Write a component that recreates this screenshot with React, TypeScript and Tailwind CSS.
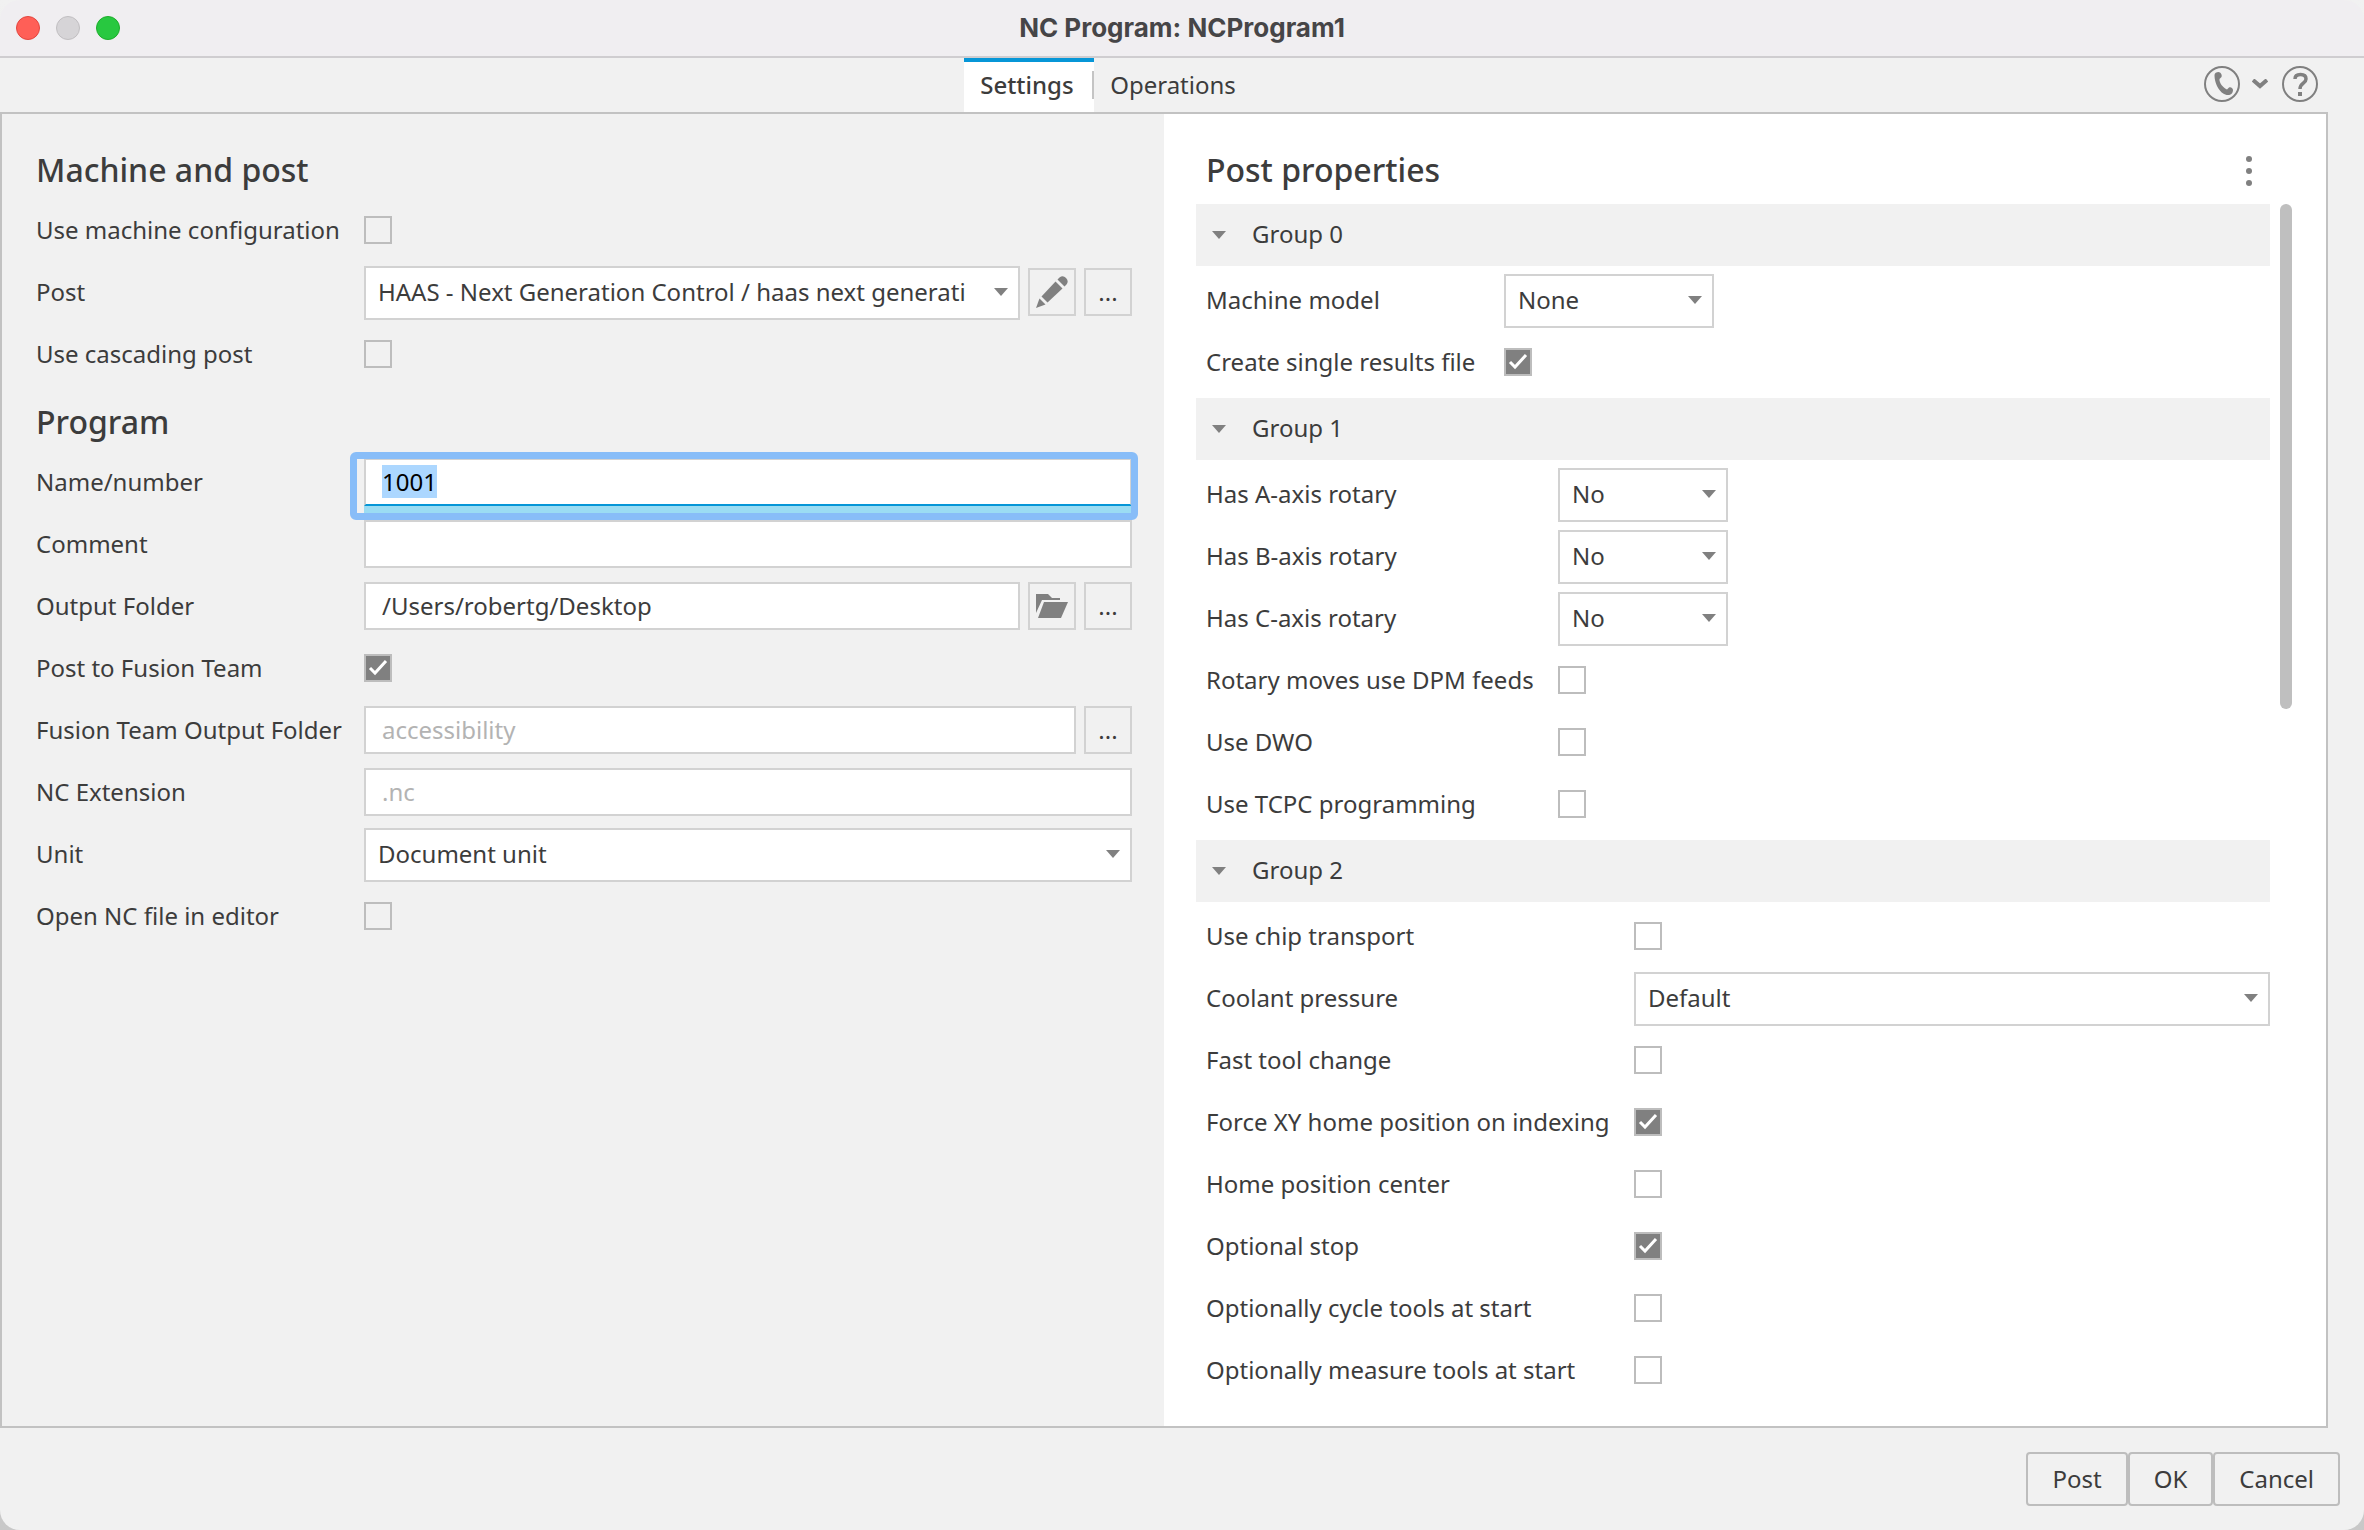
import React, { useEffect, useRef } from 'react';
import clsx from 'clsx';

const fieldBorder = 'border-2 border-[#d2d2d2]';

const DownArrow: React.FC<{ className?: string }> = ({ className }) => (
  <svg viewBox="0 0 14 8" className={clsx('h-2 w-3.5 fill-[#808080]', className)} aria-hidden="true">
    <path d="M0 0h14L7 8z" />
  </svg>
);

interface SelectProps {
  id: string;
  value: string;
  className?: string;
}

const Select: React.FC<SelectProps> = ({ id, value, className }) => (
  <div className={clsx('relative pt-0.5', className)}>
    <select
      id={id}
      defaultValue={value}
      className={clsx(
        fieldBorder,
        'block h-[54px] w-full appearance-none overflow-hidden bg-white pr-10 pb-0.5 pl-3 outline-none'
      )}
    >
      <option value={value}>{value}</option>
    </select>
    <DownArrow className="pointer-events-none absolute top-6 right-3" />
  </div>
);

const Checkbox: React.FC<{ id: string; checked?: boolean }> = ({ id, checked }) => (
  <span className="relative block size-7">
    <input
      id={id}
      type="checkbox"
      defaultChecked={checked}
      className="peer block size-7 appearance-none border-2 border-[#bdbdbd] checked:bg-[#808080]"
    />
    <svg
      viewBox="0 0 28 28"
      className="pointer-events-none absolute inset-0 hidden fill-none stroke-white stroke-3 peer-checked:block"
      aria-hidden="true"
    >
      <path d="M6 14l5 5L22 7" />
    </svg>
  </span>
);

interface TextFieldProps {
  id: string;
  value?: string;
  placeholder?: string;
}

const TextField: React.FC<TextFieldProps> = ({ id, value, placeholder }) => (
  <input
    id={id}
    type="text"
    defaultValue={value}
    placeholder={placeholder}
    className={clsx(
      fieldBorder,
      'block h-12 w-full min-w-0 flex-1 bg-white px-4 pb-0.5 outline-none placeholder:text-[#b3b3b3]'
    )}
  />
);

// Text field with the focus ring, selected on open
const FocusedField: React.FC<{ id: string; value: string }> = ({ id, value }) => {
  const ref = useRef<HTMLInputElement>(null);

  useEffect(() => {
    ref.current?.focus();
    ref.current?.select();
  }, []);

  return (
    <div className="relative h-12 flex-1">
      <input
        ref={ref}
        id={id}
        type="text"
        defaultValue={value}
        className="block h-12 w-full border-2 border-[#d2d2d2] border-b-[#0696d7] bg-white px-4 pb-0.5 leading-[34px] text-black outline-none selection:bg-[#acd7ff] selection:text-black"
      />
      <div className="absolute inset-x-0 top-full h-2 bg-[#9bdcf3]" />
      <div className="pointer-events-none absolute -top-1.5 -right-1.5 -bottom-3.5 -left-3.5 rounded-md border-[7px] border-[#88bdf8]" />
    </div>
  );
};

const IconButton: React.FC<{ label: string; children: React.ReactNode }> = ({ label, children }) => (
  <button
    type="button"
    aria-label={label}
    className={clsx(fieldBorder, 'flex size-12 shrink-0 items-center justify-center')}
  >
    {children}
  </button>
);

const PencilIcon = () => (
  <svg viewBox="0 0 32 32" className="size-8 fill-[#808080]" aria-hidden="true">
    <path d="M21.5 3.5l2-2a5 5 0 0 1 7 7l-2 2z" />
    <path d="M19.500 5.500l7 7L11.500 26.500l-6-6z" />
    <path d="M3.500 22.500l6 6L0 32z" />
  </svg>
);

const FolderIcon = () => (
  <svg viewBox="0 0 32 24" className="h-6 w-8 fill-[#808080]" aria-hidden="true">
    <path d="M0 0h12l4 4h8v2H6L0 19z" />
    <path d="M8 8h24l-7 16H2z" />
  </svg>
);

interface RowProps {
  id: string;
  label: string;
  labelClass: string;
  children: React.ReactNode;
}

const Row: React.FC<RowProps> = ({ id, label, labelClass, children }) => (
  <div className="flex h-[62px] items-center">
    <label htmlFor={id} className={clsx('shrink-0 whitespace-nowrap', labelClass)}>
      {label}
    </label>
    <div className="flex min-w-0 flex-1 items-center gap-2">{children}</div>
  </div>
);

interface Property {
  id: string;
  label: string;
  value?: string;
  checked?: boolean;
}

interface PropertyGroup {
  title: string;
  labelClass: string;
  selectClass: string;
  items: Property[];
}

const groups: PropertyGroup[] = [
  {
    title: 'Group 0',
    labelClass: 'w-[298px]',
    selectClass: 'w-[210px]',
    items: [
      { id: 'machine-model', label: 'Machine model', value: 'None' },
      { id: 'single-file', label: 'Create single results file', checked: true },
    ],
  },
  {
    title: 'Group 1',
    labelClass: 'w-[352px]',
    selectClass: 'w-[170px]',
    items: [
      { id: 'a-axis', label: 'Has A-axis rotary', value: 'No' },
      { id: 'b-axis', label: 'Has B-axis rotary', value: 'No' },
      { id: 'c-axis', label: 'Has C-axis rotary', value: 'No' },
      { id: 'dpm', label: 'Rotary moves use DPM feeds' },
      { id: 'dwo', label: 'Use DWO' },
      { id: 'tcpc', label: 'Use TCPC programming' },
    ],
  },
  {
    title: 'Group 2',
    labelClass: 'w-[428px]',
    selectClass: 'flex-1',
    items: [
      { id: 'chip', label: 'Use chip transport' },
      { id: 'coolant', label: 'Coolant pressure', value: 'Default' },
      { id: 'fast-tool', label: 'Fast tool change' },
      { id: 'force-home', label: 'Force XY home position on indexing', checked: true },
      { id: 'home-center', label: 'Home position center' },
      { id: 'optional-stop', label: 'Optional stop', checked: true },
      { id: 'cycle-tools', label: 'Optionally cycle tools at start' },
      { id: 'measure-tools', label: 'Optionally measure tools at start' },
    ],
  },
];

const Group: React.FC<{ group: PropertyGroup }> = ({ group }) => (
  <section>
    <button type="button" aria-expanded="true" className="flex h-[62px] w-full items-center gap-6 bg-[#f1f1f1] pl-4">
      <DownArrow />
      <span className="pb-0.5 pl-0.5">{group.title}</span>
    </button>
    <div className="pt-[3px] pb-[5px] pl-2.5">
      {group.items.map((item) => (
        <Row key={item.id} id={item.id} label={item.label} labelClass={group.labelClass}>
          {item.value ? (
            <Select id={item.id} value={item.value} className={group.selectClass} />
          ) : (
            <Checkbox id={item.id} checked={item.checked} />
          )}
        </Row>
      ))}
    </div>
  </section>
);

const TitleBar = () => (
  <header className="grid h-[58px] shrink-0 grid-cols-[1fr_auto_1fr] items-center border-b-2 border-[#cfcdd0] bg-[#f0eef1] px-4">
    <div className="flex gap-4">
      <button type="button" aria-label="Close" className="size-6 rounded-full border border-[#e2463f] bg-[#ff5f57]" />
      <button type="button" aria-label="Minimize" className="size-6 rounded-full border border-[#c0bec1] bg-[#d6d4d7]" />
      <button type="button" aria-label="Zoom" className="size-6 rounded-full border border-[#1dad2b] bg-[#28c840]" />
    </div>
    <h1 className="font-['Inter',sans-serif] text-[26px] font-bold text-[#464547]">NC Program: NCProgram1</h1>
  </header>
);

const TabBar = () => (
  <div className="flex h-[54px] shrink-0 items-center pr-[46px]">
    <div className="flex-1" />
    <nav role="tablist" className="ml-3 flex h-full">
      <button
        type="button"
        role="tab"
        aria-selected="true"
        className="flex h-full w-[130px] items-center justify-between border-t-4 border-[#0696d7] bg-white pb-1 pl-4 font-medium"
      >
        Settings
        <span className="h-7 w-0.5 bg-[#c4c4c4]" />
      </button>
      <button type="button" role="tab" aria-selected="false" className="h-full px-4">
        Operations
      </button>
    </nav>
    <div className="flex-1" />
    <div className="flex items-center gap-3 pb-0.5 text-[#808080]">
      <button type="button" aria-label="Contact support">
        <svg viewBox="0 0 36 36" className="size-9 fill-none stroke-current" aria-hidden="true">
          <circle cx="18" cy="18" r="17" strokeWidth="2" />
          <path
            d="M10.500 9c0-2 2-3 4-3 2 0 4 3 3 5l-2 2c-.5 4 4 9 7.500 10.500l2-2c2-1 4 1 4 2.500 0 3-2 5-5 5-7 0-13.500-10-13.500-20z"
            className="fill-current stroke-none"
          />
        </svg>
      </button>
      <button type="button" aria-label="More contact options" className="pr-0.5">
        <svg viewBox="0 0 16 10" className="h-2.5 w-4 fill-none stroke-current" aria-hidden="true">
          <path d="M1 1l7 6 7-6" strokeWidth="4" />
        </svg>
      </button>
      <button type="button" aria-label="Help">
        <svg viewBox="0 0 36 36" className="size-9 fill-none stroke-current" aria-hidden="true">
          <circle cx="18" cy="18" r="17" strokeWidth="2" />
          <path d="M13 13c0-3 2-4.500 5.500-4.500S24 10 24 13c0 4.500-6 4-6 10" strokeWidth="3.500" />
          <path d="M16 26h4v4h-4z" className="fill-current stroke-none" />
        </svg>
      </button>
    </div>
  </div>
);

const MachinePanel = () => (
  <section className="flex-1 pt-8 pr-8 pl-[34px]">
    <h2 className="flex h-[53px] items-center pb-1 text-[32px] font-medium">Machine and post</h2>
    <Row id="machine-config" label="Use machine configuration" labelClass="w-[328px]">
      <Checkbox id="machine-config" />
    </Row>
    <Row id="post" label="Post" labelClass="w-[328px]">
      <Select id="post" value="HAAS - Next Generation Control / haas next generati" className="min-w-0 flex-1" />
      <IconButton label="Edit post">
        <PencilIcon />
      </IconButton>
      <IconButton label="Browse posts">...</IconButton>
    </Row>
    <Row id="cascading" label="Use cascading post" labelClass="w-[328px]">
      <Checkbox id="cascading" />
    </Row>

    <h2 className="flex h-[66px] items-center pt-2 text-[32px] font-medium">Program</h2>
    <Row id="name" label="Name/number" labelClass="w-[328px]">
      <FocusedField id="name" value="1001" />
    </Row>
    <Row id="comment" label="Comment" labelClass="w-[328px]">
      <TextField id="comment" />
    </Row>
    <Row id="output" label="Output Folder" labelClass="w-[328px]">
      <TextField id="output" value="/Users/robertg/Desktop" />
      <IconButton label="Open folder">
        <FolderIcon />
      </IconButton>
      <IconButton label="Browse output folder">...</IconButton>
    </Row>
    <Row id="fusion-team" label="Post to Fusion Team" labelClass="w-[328px]">
      <Checkbox id="fusion-team" checked />
    </Row>
    <Row id="team-output" label="Fusion Team Output Folder" labelClass="w-[328px]">
      <TextField id="team-output" placeholder="accessibility" />
      <IconButton label="Browse team folder">...</IconButton>
    </Row>
    <Row id="extension" label="NC Extension" labelClass="w-[328px]">
      <TextField id="extension" placeholder=".nc" />
    </Row>
    <Row id="unit" label="Unit" labelClass="w-[328px]">
      <Select id="unit" value="Document unit" className="flex-1" />
    </Row>
    <Row id="open-editor" label="Open NC file in editor" labelClass="w-[328px]">
      <Checkbox id="open-editor" />
    </Row>
  </section>
);

const PropertiesPanel = () => (
  <section className="flex flex-1 flex-col bg-white pt-8 pr-[34px] pb-4 pl-8">
    <div className="flex h-[58px] items-start justify-between pr-10 pl-2.5">
      <h2 className="flex h-[53px] items-center pb-1 text-[32px] font-medium">Post properties</h2>
      <button type="button" aria-label="More options" className="flex h-[50px] items-center">
        <svg viewBox="0 0 6 30" className="h-[30px] w-1.5 fill-[#808080]" aria-hidden="true">
          <circle cx="3" cy="3" r="3" />
          <circle cx="3" cy="15" r="3" />
          <circle cx="3" cy="27" r="3" />
        </svg>
      </button>
    </div>
    <div className="flex flex-1 gap-2.5">
      <div className="flex-1">
        {groups.map((group) => (
          <Group key={group.title} group={group} />
        ))}
      </div>
      <div className="h-[505px] w-3 rounded-full bg-[#bfbfbf]" />
    </div>
  </section>
);

const dialogButton = 'h-[54px] rounded-[4px] border-2 border-[#bdbdbd] px-6';

const App: React.FC = () => (
  <div className="min-h-screen bg-linear-to-b from-[#f1f1f1] to-[#c8c8c8]">
    <div className="flex min-h-screen flex-col overflow-hidden rounded-[20px] bg-[#f1f1f1] font-['Noto_Sans',sans-serif] text-2xl text-[#3c3c3c]">
      <TitleBar />
      <TabBar />
      <main className="mr-9 flex flex-1 border-2 border-[#c2c2c2]">
        <MachinePanel />
        <PropertiesPanel />
      </main>
      <footer className="flex shrink-0 justify-end py-6 pr-6">
        <button type="button" className={dialogButton}>Post</button>
        <button type="button" className={dialogButton}>OK</button>
        <button type="button" className={dialogButton}>Cancel</button>
      </footer>
    </div>
  </div>
);

export default App;
